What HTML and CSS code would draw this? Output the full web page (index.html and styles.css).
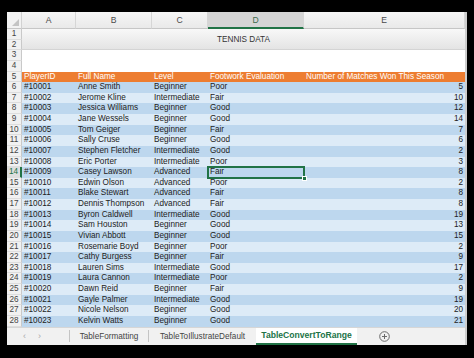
FILE: index.html
```html
<!DOCTYPE html>
<html lang="en">
<head>
    <meta charset="UTF-8">
    <meta name="viewport" content="width=device-width, initial-scale=1.0">
    <title>TableConvertToRange</title>
    <link rel="stylesheet" href="styles.css">
</head>
<body>

    <div class="window">
        <div class="sheet">
            <!-- column headers -->
            <div class="corner">
                <svg width="7" height="7" viewBox="0 0 7 7"><path d="M7 0V7H0Z" fill="#c4c4c4"/></svg>
            </div>
            <div class="col">A</div>
            <div class="col">B</div>
            <div class="col">C</div>
            <div class="col sel">D</div>
            <div class="col">E</div>

            <!-- title rows -->
            <div class="rh">1</div>
            <div class="title">TENNIS DATA</div>
            <div class="rh">2</div>
            <div class="rh">3</div>
            <div class="blank"></div>
            <div class="rh">4</div>
            <div class="blank"></div>

            <!-- table -->
            <div class="tr head">
                <div class="rh">5</div>
                <div class="c">PlayerID</div><div class="c">Full Name</div><div class="c">Level</div><div class="c">Footwork Evaluation</div><div class="c">Number of Matches Won This Season</div>
            </div>
            <div class="tr dark">
                <div class="rh">6</div>
                <div class="c">#10001</div><div class="c">Anne Smith</div><div class="c">Beginner</div><div class="c">Poor</div><div class="c num">5</div>
            </div>
            <div class="tr light">
                <div class="rh">7</div>
                <div class="c">#10002</div><div class="c">Jerome Kline</div><div class="c">Intermediate</div><div class="c">Fair</div><div class="c num">10</div>
            </div>
            <div class="tr dark">
                <div class="rh">8</div>
                <div class="c">#10003</div><div class="c">Jessica Williams</div><div class="c">Beginner</div><div class="c">Good</div><div class="c num">12</div>
            </div>
            <div class="tr light">
                <div class="rh">9</div>
                <div class="c">#10004</div><div class="c">Jane Wessels</div><div class="c">Beginner</div><div class="c">Good</div><div class="c num">14</div>
            </div>
            <div class="tr dark">
                <div class="rh">10</div>
                <div class="c">#10005</div><div class="c">Tom Geiger</div><div class="c">Beginner</div><div class="c">Fair</div><div class="c num">7</div>
            </div>
            <div class="tr light">
                <div class="rh">11</div>
                <div class="c">#10006</div><div class="c">Sally Cruse</div><div class="c">Beginner</div><div class="c">Good</div><div class="c num">6</div>
            </div>
            <div class="tr dark">
                <div class="rh">12</div>
                <div class="c">#10007</div><div class="c">Stephen Fletcher</div><div class="c">Intermediate</div><div class="c">Good</div><div class="c num">2</div>
            </div>
            <div class="tr light">
                <div class="rh">13</div>
                <div class="c">#10008</div><div class="c">Eric Porter</div><div class="c">Intermediate</div><div class="c">Poor</div><div class="c num">3</div>
            </div>
            <div class="tr dark">
                <div class="rh sel">14</div>
                <div class="c">#10009</div><div class="c">Casey Lawson</div><div class="c">Advanced</div><div class="c cur">Fair</div><div class="c num">8</div>
            </div>
            <div class="tr light">
                <div class="rh">15</div>
                <div class="c">#10010</div><div class="c">Edwin Olson</div><div class="c">Advanced</div><div class="c">Poor</div><div class="c num">2</div>
            </div>
            <div class="tr dark">
                <div class="rh">16</div>
                <div class="c">#10011</div><div class="c">Blake Stewart</div><div class="c">Advanced</div><div class="c">Fair</div><div class="c num">8</div>
            </div>
            <div class="tr light">
                <div class="rh">17</div>
                <div class="c">#10012</div><div class="c">Dennis Thompson</div><div class="c">Advanced</div><div class="c">Fair</div><div class="c num">8</div>
            </div>
            <div class="tr dark">
                <div class="rh">18</div>
                <div class="c">#10013</div><div class="c">Byron Caldwell</div><div class="c">Intermediate</div><div class="c">Good</div><div class="c num">19</div>
            </div>
            <div class="tr light">
                <div class="rh">19</div>
                <div class="c">#10014</div><div class="c">Sam Houston</div><div class="c">Beginner</div><div class="c">Good</div><div class="c num">13</div>
            </div>
            <div class="tr dark">
                <div class="rh">20</div>
                <div class="c">#10015</div><div class="c">Vivian Abbott</div><div class="c">Beginner</div><div class="c">Good</div><div class="c num">15</div>
            </div>
            <div class="tr light">
                <div class="rh">21</div>
                <div class="c">#10016</div><div class="c">Rosemarie Boyd</div><div class="c">Beginner</div><div class="c">Poor</div><div class="c num">2</div>
            </div>
            <div class="tr dark">
                <div class="rh">22</div>
                <div class="c">#10017</div><div class="c">Cathy Burgess</div><div class="c">Beginner</div><div class="c">Fair</div><div class="c num">9</div>
            </div>
            <div class="tr light">
                <div class="rh">23</div>
                <div class="c">#10018</div><div class="c">Lauren Sims</div><div class="c">Intermediate</div><div class="c">Good</div><div class="c num">17</div>
            </div>
            <div class="tr dark">
                <div class="rh">24</div>
                <div class="c">#10019</div><div class="c">Laura Cannon</div><div class="c">Intermediate</div><div class="c">Poor</div><div class="c num">2</div>
            </div>
            <div class="tr light">
                <div class="rh">25</div>
                <div class="c">#10020</div><div class="c">Dawn Reid</div><div class="c">Beginner</div><div class="c">Fair</div><div class="c num">9</div>
            </div>
            <div class="tr dark">
                <div class="rh">26</div>
                <div class="c">#10021</div><div class="c">Gayle Palmer</div><div class="c">Intermediate</div><div class="c">Good</div><div class="c num">19</div>
            </div>
            <div class="tr light">
                <div class="rh">27</div>
                <div class="c">#10022</div><div class="c">Nicole Nelson</div><div class="c">Beginner</div><div class="c">Good</div><div class="c num">20</div>
            </div>
            <div class="tr dark">
                <div class="rh">28</div>
                <div class="c">#10023</div><div class="c">Kelvin Watts</div><div class="c">Beginner</div><div class="c">Good</div><div class="c num">21</div>
            </div>
        </div>

        <!-- sheet tabs -->
        <div class="tabs">
            <div class="nav"><span>&lsaquo;</span><span>&rsaquo;</span></div>
            <div class="sep"></div>
            <div class="tab t1">TableFormatting</div>
            <div class="sep"></div>
            <div class="tab t2">TableToIllustrateDefault</div>
            <div class="tab active">TableConvertToRange</div>
            <div class="add">
                <svg width="11" height="11" viewBox="0 0 11 11"><circle cx="5.5" cy="5.5" r="4.8" fill="none" stroke="#6a6a6a"/><path d="M5.5 3v5M3 5.5h5" stroke="#6a6a6a"/></svg>
            </div>
        </div>
    </div>

</body>
</html>
```

FILE: styles.css
```css
body {
    margin: 0;
    padding: 12px 0 0 7px;
    background: #000;
    font-family: "Liberation Sans", Arial, sans-serif;
}

.window {
    width: 458px;
    background: #fff;
    border-right: 2px solid #cdcdcd;
}

.sheet {
    display: grid;
    grid-template-columns: 15px 54px 76px 56px 96px 161px;
    grid-template-rows: 17px repeat(28, 10.64px);
    font-size: 8.2px;
    color: #222;
}

.tr {
    display: contents;
}

/* headers */
.corner {
    display: flex;
    align-items: flex-end;
    justify-content: flex-end;
    padding: 0 2px 2px 0;
    background: #f2f2f2;
    border-bottom: 1px solid #c6c6c6;
    border-right: 1px solid #d2d2d2;
    box-sizing: border-box;
}

.col {
    background: linear-gradient(#f6f6f6, #e9e9e9);
    border-bottom: 1px solid #c6c6c6;
    border-right: 1px solid #d6d6d6;
    box-sizing: border-box;
    text-align: center;
    line-height: 17px;
    font-size: 8.6px;
    color: #4a4a4a;
}

.col.sel {
    background: #d5d5d5;
    border-bottom: 2px solid #217346;
    color: #3d6b4f;
}

.rh {
    grid-column: 1;
    background: #f1f1f1;
    border-right: 1px solid #c9c9c9;
    border-bottom: 1px solid #dddddd;
    box-sizing: border-box;
    text-align: center;
    line-height: 10px;
    color: #444;
}

.rh.sel {
    background: #dedede;
    border-right: 2px solid #217346;
    color: #217346;
}

.title {
    grid-column: 2 / 7;
    grid-row: span 2;
    background: linear-gradient(#f8f8f8, #e4e4e4);
    border-bottom: 1px solid #d4d4d4;
    text-align: center;
    line-height: 21px;
    color: #333;
}

.blank {
    grid-column: 2 / 7;
}

/* table cells */
.c {
    padding-left: 2px;
    line-height: 10.6px;
    white-space: nowrap;
    overflow: hidden;
}

.num {
    text-align: right;
    padding: 0 2px 0 0;
}

.head .c {
    background: #ed7d31;
    color: #fff;
}

.dark .c {
    background: #bdd7ee;
}

.light .c {
    background: #ddebf7;
}

.c.cur {
    position: relative;
    overflow: visible;
    outline: 2px solid #217346;
    outline-offset: -1px;
}

.c.cur::after {
    content: "";
    position: absolute;
    right: -3px;
    bottom: -3px;
    width: 3px;
    height: 3px;
    background: #217346;
    border: 1px solid #fff;
}

/* sheet tabs */
.tabs {
    display: flex;
    align-items: flex-start;
    height: 18px;
    background: #f1f1f1;
    border-top: 1px solid #d6d6d6;
    box-sizing: border-box;
    font-size: 8.2px;
    color: #444;
}

.nav {
    display: flex;
    gap: 12px;
    width: 62px;
    padding-left: 16px;
    box-sizing: border-box;
    line-height: 17px;
    font-size: 9px;
    color: #a8a8a8;
}

.sep {
    width: 1px;
    height: 12px;
    margin-top: 2px;
    background: #c4c4c4;
}

.tab {
    line-height: 17px;
    text-align: center;
    white-space: nowrap;
}

.t1 {
    width: 78px;
}

.t2 {
    width: 107px;
}

.tab.active {
    width: 101px;
    height: 13px;
    padding-top: 2px;
    line-height: 10px;
    background: #fff;
    border-bottom: 2px solid #217346;
    font-weight: bold;
    font-size: 8.6px;
    color: #217346;
}

.add {
    margin: 3px 0 0 22px;
    height: 11px;
}
```
